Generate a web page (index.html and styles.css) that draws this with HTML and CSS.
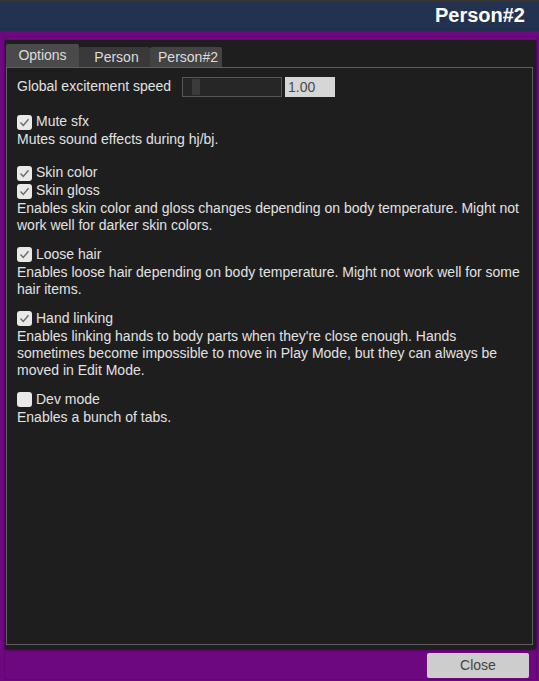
FILE: index.html
```
<!DOCTYPE html>
<html>
<head>
<meta charset="utf-8">
<link rel="stylesheet" href="styles.css">
</head>
<body>
<div class="header"><span class="title">Person#2</span></div>
<div class="frame">
  <div class="panel">
    <div class="tabs">
      <div class="tab active">Options</div>
      <div class="tab">Person</div>
      <div class="tab alt">Person#2</div>
    </div>
    <div class="content">
      <div class="row-slider">
        <span class="label">Global excitement speed</span>
        <div class="slider"><div class="thumb"></div></div>
        <div class="num">1.00</div>
      </div>
      <div class="group g1">
        <div class="check"><span class="box"><svg viewBox="0 0 15 15" width="15" height="15"><path d="M3.5 7.5 L6.3 10.5 L11.5 4.2" fill="none" stroke="#6a6a6a" stroke-width="1.4"/></svg></span>Mute sfx</div>
        <div class="desc">Mutes sound effects during hj/bj.</div>
      </div>
      <div class="group g2">
        <div class="check"><span class="box"><svg viewBox="0 0 15 15" width="15" height="15"><path d="M3.5 7.5 L6.3 10.5 L11.5 4.2" fill="none" stroke="#6a6a6a" stroke-width="1.4"/></svg></span>Skin color</div>
        <div class="check"><span class="box"><svg viewBox="0 0 15 15" width="15" height="15"><path d="M3.5 7.5 L6.3 10.5 L11.5 4.2" fill="none" stroke="#6a6a6a" stroke-width="1.4"/></svg></span>Skin gloss</div>
        <div class="desc">Enables skin color and gloss changes depending on body temperature. Might not work well for darker skin colors.</div>
      </div>
      <div class="group">
        <div class="check"><span class="box"><svg viewBox="0 0 15 15" width="15" height="15"><path d="M3.5 7.5 L6.3 10.5 L11.5 4.2" fill="none" stroke="#6a6a6a" stroke-width="1.4"/></svg></span>Loose hair</div>
        <div class="desc">Enables loose hair depending on body temperature. Might not work well for some hair items.</div>
      </div>
      <div class="group">
        <div class="check"><span class="box"><svg viewBox="0 0 15 15" width="15" height="15"><path d="M3.5 7.5 L6.3 10.5 L11.5 4.2" fill="none" stroke="#6a6a6a" stroke-width="1.4"/></svg></span>Hand linking</div>
        <div class="desc">Enables linking hands to body parts when they're close enough. Hands sometimes become impossible to move in Play Mode, but they can always be moved in Edit Mode.</div>
      </div>
      <div class="group">
        <div class="check"><span class="box"></span>Dev mode</div>
        <div class="desc">Enables a bunch of tabs.</div>
      </div>
    </div>
  </div>
  <div class="footer">
    <div class="close">Close</div>
  </div>
</div>
</body>
</html>
```
FILE: styles.css
```
html, body {
  margin: 0;
  padding: 0;
  height: 100%;
  background: #6e0880;
  font-family: "Liberation Sans", Arial, sans-serif;
  overflow: hidden;
}
.header {
  height: 29px;
  border-top: 2px solid #38342f;
  background: #22324f;
  display: flex;
  justify-content: flex-end;
  align-items: center;
  padding-right: 14px;
}
.title {
  color: #ffffff;
  font-weight: bold;
  font-size: 20px;
  margin-top: -2px;
}
.frame {
  height: 650px;
  box-sizing: border-box;
  padding: 9px 3px 0 5px;
  display: flex;
  flex-direction: column;
  position: relative;
}
.frame::before {
  content: "";
  position: absolute;
  left: 4px;
  right: 2px;
  top: 5px;
  bottom: 1px;
  border: 1px solid #620672;
  pointer-events: none;
}
.panel {
  position: relative;
  height: 609px;
  background: #1e1e1e;
  box-shadow: 0 1px 2px rgba(0,0,0,0.5);
  padding: 4px 3px 4px 1px;
  box-sizing: border-box;
  display: flex;
  flex-direction: column;
}
.tabs {
  display: flex;
  align-items: flex-end;
  height: 23px;
}
.tab {
  height: 20px;
  line-height: 20px;
  background: #393939;
  color: #dcdcdc;
  font-size: 14px;
  text-align: center;
  box-sizing: border-box;
  border-radius: 2px 2px 0 0;
}
.tab.active {
  width: 73px;
  height: 23px;
  line-height: 22px;
  background: #4a4a4a;
}
.tab:nth-child(2) { width: 71px; padding-left: 4px; }
.tab.alt { width: 72px; background: #434343; padding-left: 4px; }
.content {
  flex: 1;
  border: 1px solid #5f5f5f;
  padding: 9px 10px 0 10px;
  color: #e2e2e2;
  font-size: 14px;
  line-height: 17.4px;
}
.row-slider {
  display: flex;
  align-items: center;
  height: 20px;
}
.label { width: 165px; }
.slider {
  width: 98px;
  height: 18px;
  border: 1px solid #555;
  background: #262626;
  position: relative;
  margin-right: 3px;
}
.thumb {
  position: absolute;
  left: 9px;
  top: 1px;
  width: 8px;
  height: 16px;
  background: #3b3b3b;
  border-radius: 1px;
}
.num {
  width: 50px;
  height: 20px;
  background: #d6d6d6;
  color: #4a4a4a;
  font-size: 14px;
  line-height: 20px;
  padding-left: 3px;
  box-sizing: border-box;
}
.group { margin-top: 11px; }
.group.g1 { margin-top: 16px; }
.group.g2 { margin-top: 15.6px; }
.check {
  display: flex;
  align-items: center;
  height: 18px;
}
.box {
  width: 15px;
  height: 15px;
  background: #e9e9e9;
  border-radius: 3px;
  margin-right: 4px;
  display: inline-flex;
}
.desc { padding-right: 2px; }
.footer {
  display: flex;
  justify-content: flex-end;
  padding: 4px 7px 0 0;
}
.close {
  width: 102px;
  height: 25px;
  line-height: 25px;
  background: #cdcdcd;
  color: #444;
  text-align: center;
  font-size: 14px;
  border-radius: 2px;
}
```
